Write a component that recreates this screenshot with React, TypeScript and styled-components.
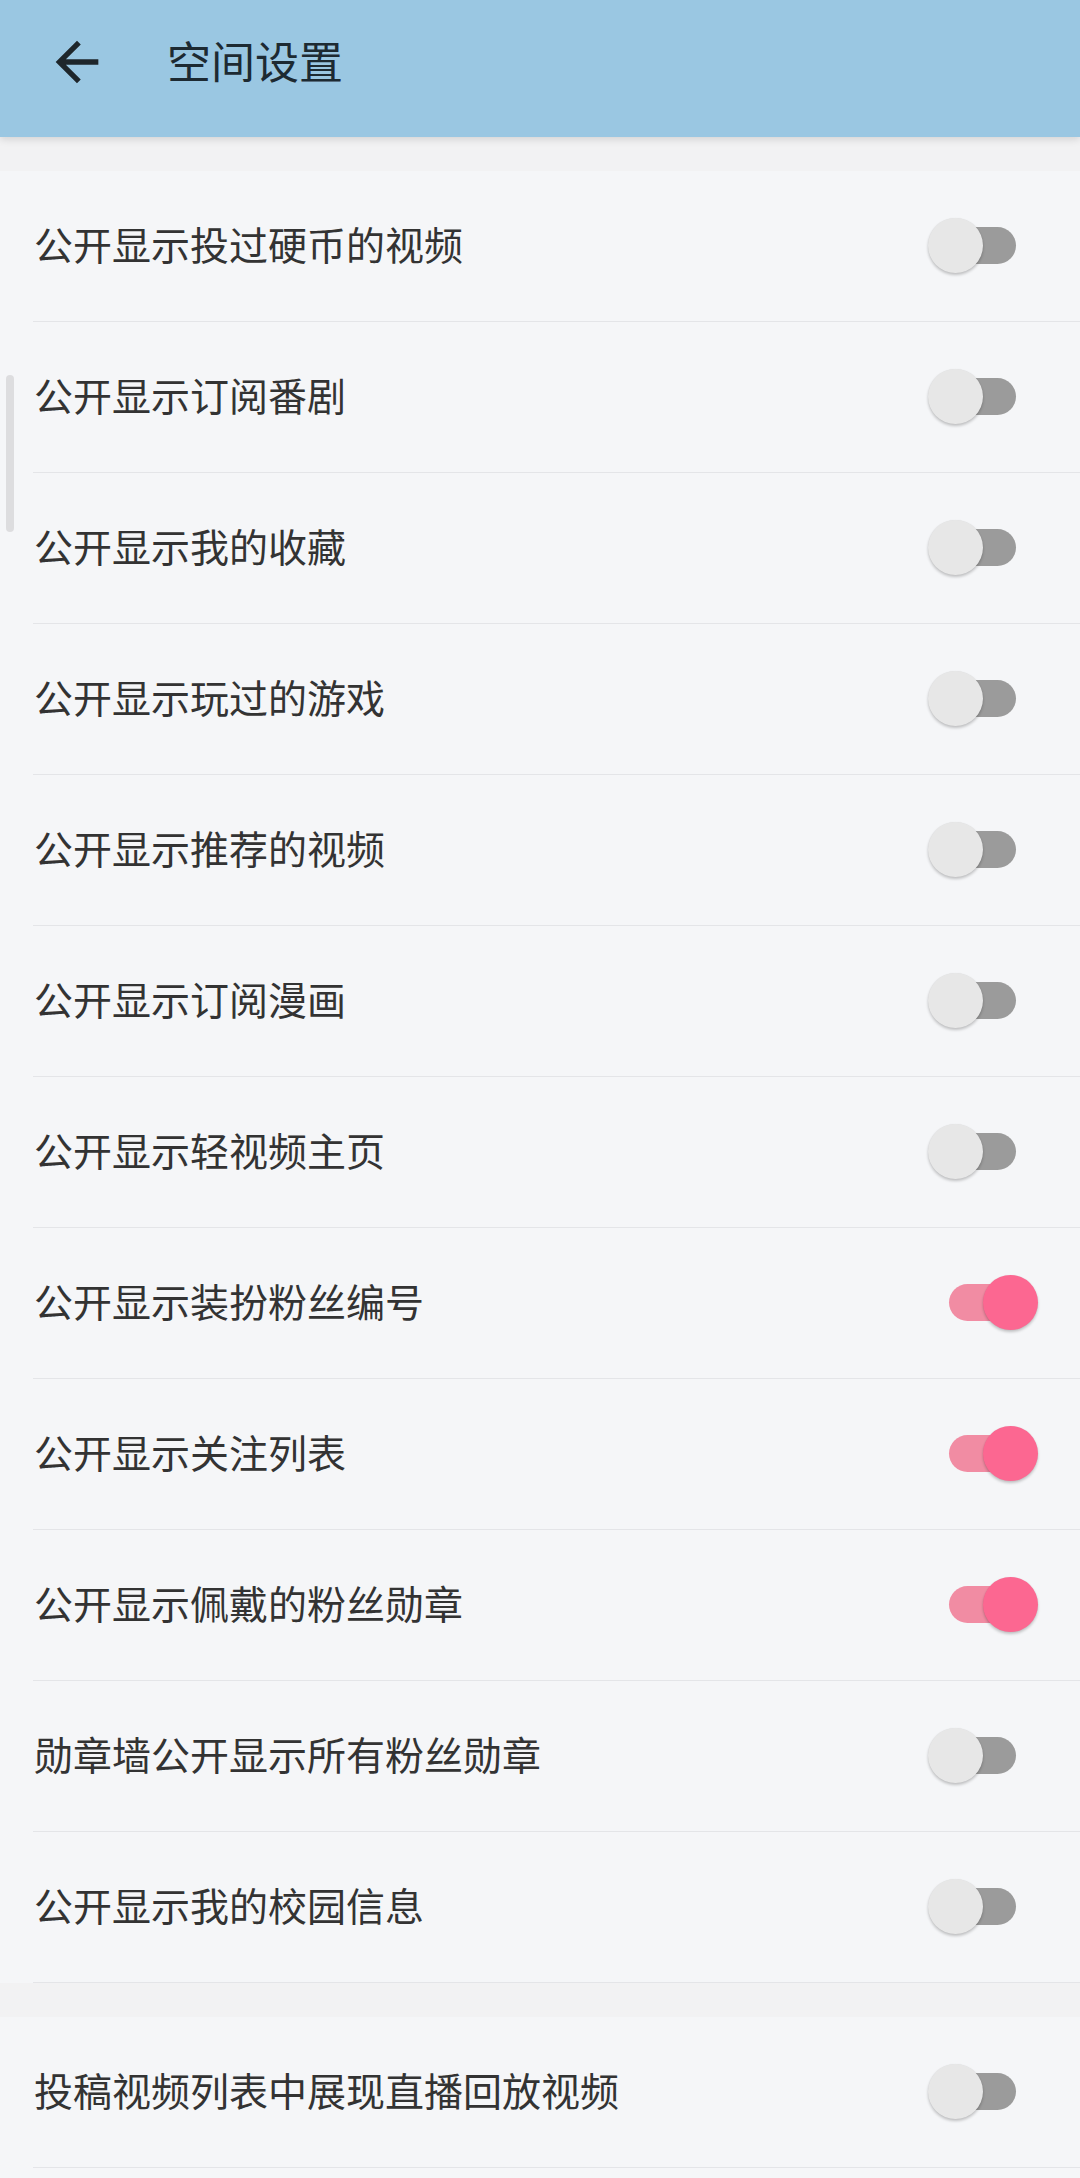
import React from "react";
import styled, { createGlobalStyle } from "styled-components";

const GlobalStyle = createGlobalStyle`
  html, body {
    margin: 0;
    padding: 0;
    background: #f2f2f3;
    font-family: "Noto Sans CJK SC", "Noto Sans", sans-serif;
  }
  * { box-sizing: border-box; }
`;

const Page = styled.div`
  position: relative;
  width: 1080px;
  min-height: 2178px;
  overflow: hidden;
  background: #f2f2f3;
`;

const Header = styled.header`
  position: relative;
  z-index: 2;
  height: 137px;
  background: #9ac7e2;
  display: flex;
  align-items: center;
  padding: 0 0 14px 45px;
  box-shadow: 0 2px 8px rgba(0, 0, 0, 0.14);
`;

const BackButton = styled.button`
  width: 64px;
  height: 64px;
  padding: 0;
  border: none;
  background: transparent;
  display: flex;
  align-items: center;
  justify-content: center;
  color: #1e262b;
`;

const Title = styled.h1`
  margin: 0 0 0 58px;
  padding-bottom: 2px;
  font-size: 44px;
  font-weight: 400;
  line-height: 1.2;
  color: #1d2a32;
  letter-spacing: 0;
`;

const Gap = styled.div`
  height: 34px;
`;

const Section = styled.section`
  background: #f5f6f8;
`;

const Row = styled.div`
  height: 151px;
  margin-left: 33px;
  padding: 0 42px 0 1px;
  border-bottom: 1px solid #e4e5e8;
  display: flex;
  align-items: center;
  justify-content: space-between;
`;

const Label = styled.span`
  font-size: 39px;
  line-height: 1.2;
  padding-bottom: 5px;
  color: #333333;
  white-space: nowrap;
`;

const SwitchBox = styled.div`
  position: relative;
  width: 110px;
  height: 56px;
  flex-shrink: 0;
`;

const Track = styled.div<{ $on: boolean }>`
  position: absolute;
  left: 21px;
  top: 9px;
  width: 67px;
  height: 37px;
  border-radius: 19px;
  background: ${(p) => (p.$on ? "#f18ca3" : "#9b9b9b")};
`;

const Thumb = styled.div<{ $on: boolean }>`
  position: absolute;
  top: 0;
  left: ${(p) => (p.$on ? "55px" : "0")};
  width: 55px;
  height: 55px;
  border-radius: 50%;
  background: ${(p) => (p.$on ? "#fc6791" : "#e7e7e7")};
  box-shadow: 0 2px 3px rgba(0, 0, 0, 0.22), 0 0 1px rgba(0, 0, 0, 0.08);
`;

const ScrollBar = styled.div`
  position: absolute;
  left: 6px;
  top: 375px;
  width: 8px;
  height: 157px;
  border-radius: 4px;
  background: #dddddf;
  z-index: 3;
`;

const Switch: React.FC<{ on: boolean }> = ({ on }) => (
  <SwitchBox>
    <Track $on={on} />
    <Thumb $on={on} />
  </SwitchBox>
);

const ArrowBack = () => (
  <svg width="64" height="64" viewBox="0 0 24 24" fill="currentColor">
    <path d="M20 11H7.83l5.59-5.59L12 4l-8 8 8 8 1.41-1.41L7.83 13H20v-2z" />
  </svg>
);

const mainItems: { label: string; on: boolean }[] = [
  { label: "公开显示投过硬币的视频", on: false },
  { label: "公开显示订阅番剧", on: false },
  { label: "公开显示我的收藏", on: false },
  { label: "公开显示玩过的游戏", on: false },
  { label: "公开显示推荐的视频", on: false },
  { label: "公开显示订阅漫画", on: false },
  { label: "公开显示轻视频主页", on: false },
  { label: "公开显示装扮粉丝编号", on: true },
  { label: "公开显示关注列表", on: true },
  { label: "公开显示佩戴的粉丝勋章", on: true },
  { label: "勋章墙公开显示所有粉丝勋章", on: false },
  { label: "公开显示我的校园信息", on: false },
];

const extraItems: { label: string; on: boolean }[] = [
  { label: "投稿视频列表中展现直播回放视频", on: false },
  { label: "", on: false },
];

export default function App() {
  return (
    <Page>
      <GlobalStyle />
      <Header>
        <BackButton aria-label="返回">
          <ArrowBack />
        </BackButton>
        <Title>空间设置</Title>
      </Header>
      <ScrollBar />
      <Gap />
      <Section>
        {mainItems.map((it) => (
          <Row key={it.label}>
            <Label>{it.label}</Label>
            <Switch on={it.on} />
          </Row>
        ))}
      </Section>
      <Gap />
      <Section>
        {extraItems.map((it, i) => (
          <Row key={i}>
            <Label>{it.label}</Label>
            {it.label && <Switch on={it.on} />}
          </Row>
        ))}
      </Section>
    </Page>
  );
}
